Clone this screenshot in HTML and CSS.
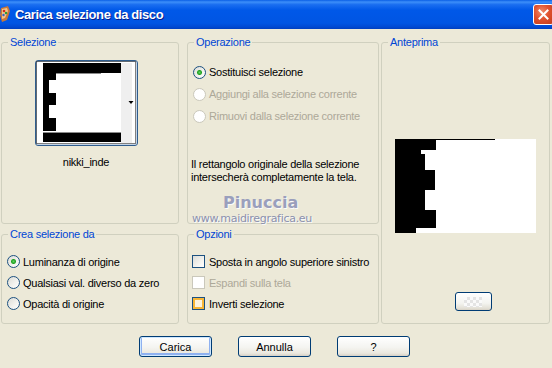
FILE: index.html
```html
<!DOCTYPE html>
<html lang="it">
<head>
    <meta charset="UTF-8">
    <title>Carica selezione da disco</title>
    <link rel="stylesheet" href="styles.css">
</head>
<body>
    <div class="window">
        <div class="titlebar">
            <svg class="app-icon" width="11" height="18" viewBox="0 0 11 18">
                <path d="M1 3 L8 1 L10 6 L7 15 L2 17 L0 10 Z" fill="#c8783a"/>
                <path d="M2 4 L7 3 L8 6 L5 13 L2 14 Z" fill="#f3c48a"/>
                <circle cx="4" cy="6" r="1.3" fill="#d0301e"/>
                <circle cx="6" cy="8" r="1.2" fill="#2a9a34"/>
                <circle cx="3.5" cy="10" r="1.2" fill="#2f5fd0"/>
            </svg>
            <span class="title">Carica selezione da disco</span>
            <span class="close">
                <svg width="11" height="11" viewBox="0 0 11 11">
                    <path d="M1.5 1.5 L9.5 9.5 M9.5 1.5 L1.5 9.5" stroke="#fff" stroke-width="2" stroke-linecap="square"/>
                </svg>
            </span>
        </div>

        <div class="content">
            <fieldset class="group sel">
                <legend>Selezione</legend>
                <div class="sel-body">
                    <div class="thumb">
                        <svg width="101" height="84" viewBox="0 0 101 84">
                            <rect x="2" y="2" width="95" height="80" fill="#fff"/>
                            <rect x="85" y="2" width="11" height="80" fill="#efefef"/>
                            <rect x="7" y="2" width="78" height="10" fill="#000"/>
                            <path d="M7 12 H20 V19 H13 V32 H20 V44 H13 V57 H20 V70 H7 Z" fill="#000"/>
                            <rect x="20" y="12" width="45" height="1" fill="#8a8a8a"/>
                            <rect x="7" y="71" width="78" height="1" fill="#8a8a8a"/>
                            <rect x="7" y="72" width="78" height="9" fill="#000"/>
                            <path d="M92.5 40 H97.5 L95 43 Z" fill="#000"/>
                            <rect x="0.5" y="0.5" width="99" height="82" fill="none" stroke="#000" stroke-dasharray="1 1"/>
                        </svg>
                    </div>
                    <div class="thumb-name">nikki_inde</div>
                </div>
            </fieldset>

            <fieldset class="group op">
                <legend>Operazione</legend>
                <div class="op-body">
                    <label class="opt"><input type="radio" name="op" checked>Sostituisci selezione</label>
                    <label class="opt off"><input type="radio" name="op" disabled>Aggiungi alla selezione corrente</label>
                    <label class="opt off"><input type="radio" name="op" disabled>Rimuovi dalla selezione corrente</label>
                    <p class="note">Il rettangolo originale della selezione<br>intersecherà completamente la tela.</p>
                </div>
            </fieldset>

            <fieldset class="group preview">
                <legend>Anteprima</legend>
                <div class="preview-body">
                    <svg class="preview-img" width="141" height="94" viewBox="0 0 141 94">
                        <rect width="141" height="94" fill="#fff"/>
                        <rect width="100" height="1" fill="#000"/>
                        <path d="M0 0 H41 V11 H26 V15 H30 V31 H40 V51 H30 V71 H41 V89 H21 V94 H0 Z" fill="#000"/>
                    </svg>
                    <button class="bg-btn"><span class="checker"></span></button>
                </div>
            </fieldset>

            <fieldset class="group crea">
                <legend>Crea selezione da</legend>
                <div class="crea-body">
                    <label class="opt"><input type="radio" name="src" checked>Luminanza di origine</label>
                    <label class="opt"><input type="radio" name="src">Qualsiasi val. diverso da zero</label>
                    <label class="opt"><input type="radio" name="src">Opacità di origine</label>
                </div>
            </fieldset>

            <fieldset class="group opzioni">
                <legend>Opzioni</legend>
                <div class="opzioni-body">
                    <label class="opt chk"><input type="checkbox">Sposta in angolo superiore sinistro</label>
                    <label class="opt chk off"><input type="checkbox" disabled>Espandi sulla tela</label>
                    <label class="opt chk"><input type="checkbox" class="hot">Inverti selezione</label>
                </div>
            </fieldset>
        </div>

        <div class="buttons">
            <button class="btn default">Carica</button>
            <button class="btn">Annulla</button>
            <button class="btn">?</button>
        </div>

        <div class="watermark">
            <div class="wm-name">Pinuccia</div>
            <div class="wm-site">www.maidiregrafica.eu</div>
        </div>
    </div>
</body>
</html>
```

FILE: styles.css
```css
body {
    margin: 0;
    font-family: "Liberation Sans", Arial, sans-serif;
    font-size: 11px;
    letter-spacing: -0.25px;
    color: #000;
}
.window {
    position: relative;
    width: 552px;
    height: 368px;
    background-color: #ece9d8;
    overflow: hidden;
}
.titlebar {
    height: 29px;
    display: flex;
    align-items: center;
    background: linear-gradient(to bottom, #0a5fe6 0%, #3d8ff9 7%, #1a6ef0 16%, #0058e8 35%, #0055e3 80%, #0049d2 93%, #003fbf 100%);
}
.app-icon {
    margin-left: 0;
    margin-top: -1px;
}
.title {
    margin-left: 4px;
    color: #fff;
    font-weight: bold;
    font-size: 13px;
    letter-spacing: -0.4px;
    text-shadow: 1px 1px 0 #0a1e8c;
}
.close {
    margin-left: auto;
    margin-right: -2px;
    width: 19px;
    height: 19px;
    display: flex;
    align-items: center;
    justify-content: center;
    border: 1px solid #fff;
    border-radius: 3px;
    background: radial-gradient(circle at 40% 35%, #f08a6a 0%, #e0512e 45%, #c13a1a 100%);
}
.content {
    display: grid;
    grid-template-columns: 178px 8px 192px 2px 169px;
    grid-template-rows: 188px 4px 96px;
    padding: 7px 0 0 1px;
}
.group {
    margin: 0;
    padding: 0;
    min-width: 0;
    border: 1px solid #d0d0bf;
    border-radius: 3px;
}
.group legend {
    margin-left: 6px;
    padding: 0 2px;
    line-height: 13px;
    color: #0046d5;
}
.sel { grid-column: 1; grid-row: 1; }
.op { grid-column: 3; grid-row: 1; }
.preview { grid-column: 5; grid-row: 1 / span 3; }
.crea { grid-column: 1; grid-row: 3; }
.opzioni { grid-column: 3; grid-row: 3; }

.sel-body {
    display: flex;
    flex-direction: column;
    align-items: center;
    padding: 11px 8px 0 0;
}
.thumb {
    width: 101px;
    height: 84px;
    border: 1px solid #2f5d8e;
    border-radius: 3px;
    background: #fff;
    box-shadow: inset 0 0 0 1px #c3d3e6;
}
.thumb svg {
    display: block;
}
.thumb-name {
    margin-top: 10px;
    line-height: 13px;
}

.opt {
    display: flex;
    align-items: center;
    gap: 3px;
    height: 21px;
    white-space: nowrap;
}
.opt.off {
    color: #aca899;
}
.opt input {
    appearance: none;
    -webkit-appearance: none;
    margin: 0;
    width: 13px;
    height: 13px;
    flex: none;
    border: 1px solid #1c5180;
    background: linear-gradient(135deg, #dcdcd7 0%, #f3f3ef 60%, #fff 100%);
}
.opt input[type="radio"] {
    border-radius: 50%;
}
.opt input[type="radio"]:checked {
    background: radial-gradient(circle at 50% 50%, #5ed463 0, #21a121 2px, rgba(33, 161, 33, 0) 3px), linear-gradient(135deg, #dcdcd7 0%, #f3f3ef 60%, #fff 100%);
}
.opt input:disabled {
    border-color: #cac8bb;
    background: #fff;
}
.opt.chk {
    gap: 4px;
}
.opt input.hot {
    box-shadow: inset 0 0 0 2px #f8b636;
    background: #fdf3dc;
}

.op-body {
    padding: 12px 0 0 3px;
}
.op-body .opt {
    height: 22px;
    padding-left: 2px;
}
.note {
    margin: 31px 0 0;
    line-height: 13px;
}

.preview-body {
    display: flex;
    flex-direction: column;
    align-items: center;
    padding-top: 90px;
}
.preview-img {
    display: block;
}
.bg-btn {
    margin: 59px 0 0 15px;
    width: 37px;
    height: 19px;
    padding: 0;
    display: flex;
    align-items: center;
    justify-content: center;
    border: 1px solid #003c74;
    border-radius: 3px;
    background: linear-gradient(to bottom, #fff 0%, #f4f4f0 60%, #e3e0d6 90%, #d6d0c5 100%);
}
.checker {
    width: 18px;
    height: 10px;
    background-color: #fafafa;
    background-image: linear-gradient(45deg, #e4e4e4 25%, transparent 25%, transparent 75%, #e4e4e4 75%), linear-gradient(45deg, #e4e4e4 25%, transparent 25%, transparent 75%, #e4e4e4 75%);
    background-size: 6px 6px;
    background-position: 0 0, 3px 3px;
}

.crea-body {
    padding: 10px 0 0 5px;
}
.opzioni-body {
    padding: 10px 0 0 4px;
}

.buttons {
    display: flex;
    justify-content: center;
    gap: 26px;
    margin-top: 12px;
    padding-right: 3px;
}
.btn {
    width: 73px;
    height: 21px;
    padding: 0;
    font-family: "Liberation Sans", Arial, sans-serif;
    font-size: 11px;
    color: #000;
    border: 1px solid #003c74;
    border-radius: 3px;
    background: linear-gradient(to bottom, #fff 0%, #f4f4f0 55%, #ebe8df 85%, #d6d0c5 100%);
}
.btn.default {
    box-shadow: inset 0 0 0 1px #cee7ff, inset 0 -1px 0 2px #8fb1f0;
}

.watermark {
    position: absolute;
    left: 192px;
    top: 194px;
    color: #9a9fbc;
    text-shadow: 1px 1px 0 #fbfbfb;
    font-family: "DejaVu Sans", sans-serif;
    letter-spacing: 0;
}
.wm-name {
    margin-left: 31px;
    font-size: 16px;
    font-weight: bold;
    line-height: 18px;
}
.wm-site {
    font-size: 11px;
    letter-spacing: -0.3px;
    line-height: 13px;
    color: #8a90ad;
}
```
